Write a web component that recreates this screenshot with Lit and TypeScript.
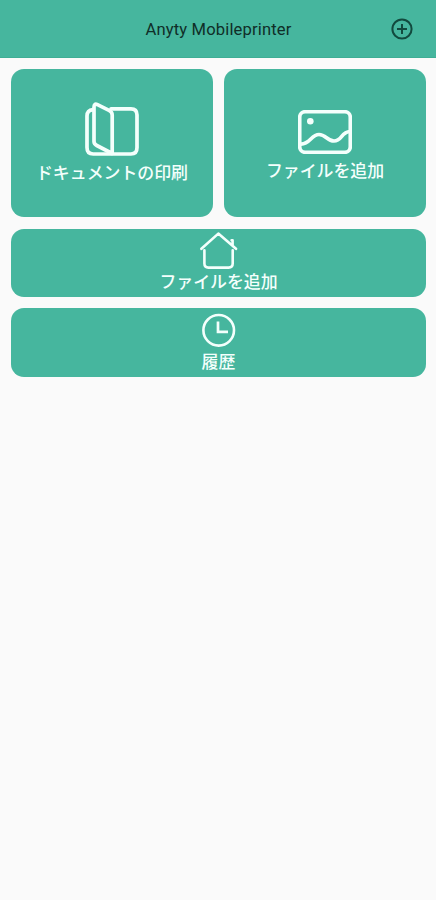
import { LitElement, html, css, svg } from "lit";
import { customElement, property } from "lit/decorators.js";

const bookIcon = html`<svg width="54" height="54" viewBox="0 0 54 54">
  ${svg`<path d="M8 7.6Q2 8.2 2 14V45.5Q2 52 8.2 52H46Q52 52 52 45.5V13Q52 6.9 46 6.9H26"/>
  <path d="M9 5.2Q9 1 12.5 2.7L24 8.4Q27.2 10 27.2 13V51.5L11.8 43.5Q9 42 9 39.5Z"/>`}
</svg>`;

const imageIcon = html`<svg width="54" height="44" viewBox="0 0 54 44">
  ${svg`<rect x="1.7" y="1.7" width="50.6" height="40.6" rx="5.5"/>
  <circle class="dot" cx="12.3" cy="11.2" r="3.3"/>
  <path d="M2 34C12 35 13 24.5 21 24.5C28 24.5 29 31 36 31C44 31 43 22 52 21.5"/>`}
</svg>`;

const homeIcon = html`<svg width="38" height="37" viewBox="0 0 38 37">
  ${svg`<path class="thin" d="M1.4 16.8L18.3 1.6L36 16.8M32.6 13V8.2H31.6M4.4 18.2V31.5Q4.4 35.6 8.4 35.6H28.6Q32.7 35.6 32.7 31.5V18.2"/>`}
</svg>`;

const clockIcon = html`<svg width="34" height="34" viewBox="0 0 34 34">
  ${svg`<circle class="thin" cx="16.7" cy="17.3" r="15.3"/><path class="square" d="M16 8.5V18.8H26"/>`}
</svg>`;

@customElement("menu-tile")
export class MenuTile extends LitElement {
  @property() label = "";
  @property({ attribute: false }) icon: unknown;

  static styles = css`
    :host {
      display: flex;
      flex-direction: column;
      align-items: center;
      box-sizing: border-box;
      border-radius: 13px;
      background: #46b69e;
      color: #f4fffc;
      font: 500 16.9px/24px "Noto Sans CJK JP", sans-serif;
      white-space: nowrap;
    }
    svg {
      display: block;
      flex: none;
      fill: none;
      stroke: #f4fffc;
      stroke-width: 3.7;
      stroke-linecap: round;
      stroke-linejoin: round;
    }
    .thin { stroke-width: 2.6; }
    .square { stroke-width: 2.7; stroke-linecap: butt; stroke-linejoin: miter; }
    .dot { fill: #f4fffc; stroke: none; }
  `;

  render() {
    return html`${this.icon}<span>${this.label}</span>`;
  }
}

@customElement("app-root")
export class AppRoot extends LitElement {
  static styles = css`
    :host {
      display: flex;
      flex-direction: column;
      height: 100vh;
      background: #fafafa;
    }
    header {
      display: grid;
      grid-template-columns: 48px 1fr 48px;
      align-items: center;
      box-sizing: border-box;
      height: 58px;
      padding: 0 10px;
      background: #46b69e;
      color: #102e28;
      border-bottom: 1px solid #3fae95;
    }
    h1 {
      margin: 0;
      padding: 2px 0 0 1px;
      text-align: center;
      font: 400 16.6px/24px Roboto, sans-serif;
      letter-spacing: 0.13px;
    }
    .add {
      justify-self: center;
      fill: none;
      stroke: #124a3e;
      stroke-width: 2;
    }
    main {
      display: grid;
      grid-template-columns: 1fr 1fr;
      grid-template-rows: 148.4px 68.4px 68.4px;
      gap: 11.2px 11px;
      padding: 11px 10px 0 11px;
    }
    .document { padding-top: 33px; }
    .picture { padding-top: 41px; }
    .document, .picture { row-gap: 4px; }
    .wide { grid-column: 1 / -1; }
    .home { padding-top: 3.4px; }
    .history { padding-top: 5px; row-gap: 2px; }
  `;

  render() {
    return html`
      <header>
        <span></span>
        <h1>Anyty Mobileprinter</h1>
        <svg class="add" width="22" height="22" viewBox="0 0 22 22">
          <circle cx="11" cy="11" r="9.6" /><path d="M11 6V16M6 11H16" />
        </svg>
      </header>
      <main>
        <menu-tile class="document" .icon=${bookIcon} label="ドキュメントの印刷"></menu-tile>
        <menu-tile class="picture" .icon=${imageIcon} label="ファイルを追加"></menu-tile>
        <menu-tile class="wide home" .icon=${homeIcon} label="ファイルを追加"></menu-tile>
        <menu-tile class="wide history" .icon=${clockIcon} label="履歴"></menu-tile>
      </main>
    `;
  }
}
